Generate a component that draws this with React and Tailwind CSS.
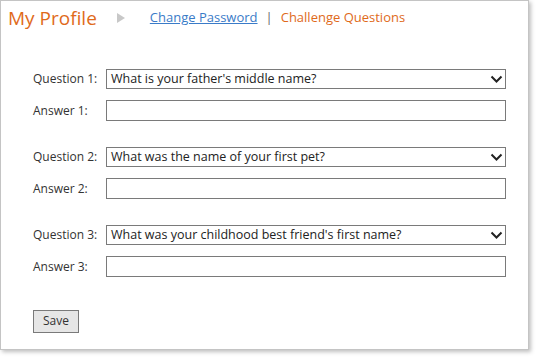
import React from 'react';

const questions = [
  { id: 1, value: "What is your father's middle name?" },
  { id: 2, value: 'What was the name of your first pet?' },
  { id: 3, value: "What was your childhood best friend's first name?" },
];

function Chevron() {
  return (
    <svg width="13" height="9" viewBox="0 0 13 9" className="shrink-0">
      <path d="M1.5 1.5 L6.5 6.5 L11.5 1.5" fill="none" stroke="#222" strokeWidth="2" />
    </svg>
  );
}

function QuestionGroup({ id, value }) {
  return (
    <div className="flex flex-col gap-[11px]">
      <div className="flex items-center">
        <label className="w-[73px] text-[12px] text-[#333]">Question {id}:</label>
        <div className="flex items-center justify-between w-[400px] h-[20px] border border-[#7a7a7a] bg-white pl-[4px] pr-[2px]">
          <span className="text-[12.5px] text-[#222] leading-none">{value}</span>
          <Chevron />
        </div>
      </div>
      <div className="flex items-center">
        <label className="w-[73px] text-[12px] text-[#333]">Answer {id}:</label>
        <input type="text" className="w-[400px] h-[21px] border border-[#7a7a7a] bg-white outline-none" />
      </div>
    </div>
  );
}

export default function App() {
  return (
    <div className="w-[538px] h-[359px] bg-white" style={{ fontFamily: '"Open Sans", "Noto Sans", sans-serif' }}>
      <div className="w-[529px] h-[350px] border border-[#c4c4c4] shadow-[2px_2px_4px_rgba(0,0,0,0.25)] bg-white flex flex-col">
        <div className="flex items-center pl-[7px] pt-[4px] h-[30px]">
          <h1 className="text-[19px] text-[#e06a1a] leading-none">My Profile</h1>
          <svg width="8" height="10" viewBox="0 0 8 10" className="ml-[20px]">
            <path d="M0 0 L8 5 L0 10 Z" fill="#c8c8c8" />
          </svg>
          <a href="#" className="ml-[25px] text-[13px] text-[#3a7bc8] underline">Change Password</a>
          <span className="mx-[8px] text-[13px] text-[#666]">|</span>
          <span className="text-[13px] text-[#e06a1a]">Challenge Questions</span>
        </div>
        <form className="flex flex-col gap-[26px] pl-[32px] pt-[38px]">
          {questions.map((q) => (
            <QuestionGroup key={q.id} {...q} />
          ))}
          <div className="pt-[4px]">
            <button type="button" className="w-[46px] h-[23px] border border-[#7a7a7a] bg-[#e6e6e6] text-[12px] text-[#333]">Save</button>
          </div>
        </form>
      </div>
    </div>
  );
}
